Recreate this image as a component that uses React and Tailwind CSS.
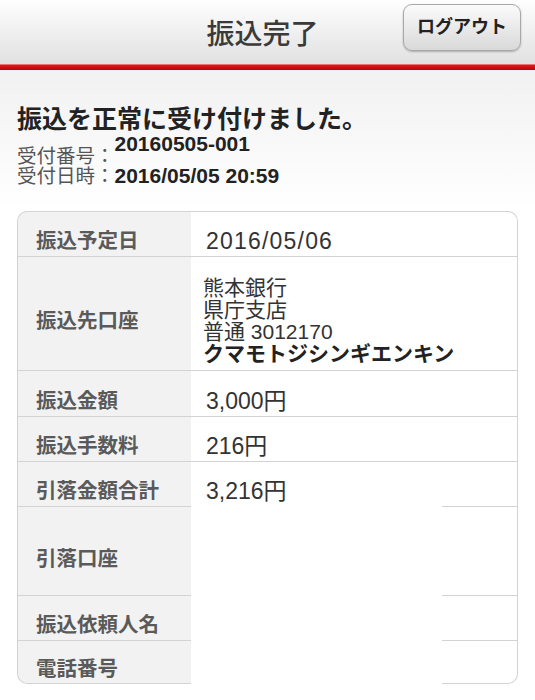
export default function App() {
  const border = "border-[#d3d3d3]";
  const labelBase =
    "w-[174px] shrink-0 bg-[#f2f2f2] border-l border-t border-[#d3d3d3] flex items-center pl-[18px] text-[20.5px] leading-[22px] font-bold text-[#5a5a5a]";
  const valueBase =
    "flex-1 bg-white border-t border-r border-[#d3d3d3] pl-[15px] text-[23px] leading-[22px] text-[#333]";

  return (
    <div className="w-[535px] h-[700px] overflow-hidden bg-white font-['Liberation_Sans','Noto_Sans_CJK_JP',sans-serif]">
      {/* header */}
      <div className="h-[64px] bg-[linear-gradient(#fefefe,#e1e1e1)] grid grid-cols-[1fr_auto_1fr] items-center">
        <div />
        <h1 className="text-[28px] leading-[32px] font-medium text-[#3a3a3a] pr-[10px] pt-[6px]">振込完了</h1>
        <div className="flex justify-end pr-[14px]">
          <button className="w-[118px] h-[47px] rounded-[9px] border border-[#a8a8a8] bg-[linear-gradient(#fbfbfb,#d9d9d9)] shadow-[0_1px_2px_rgba(0,0,0,0.25)] text-[18px] font-bold text-[#222] mb-[9px]">
            ログアウト
          </button>
        </div>
      </div>
      <div className="h-[6px] bg-[linear-gradient(#f07070_0,#f07070_1px,#d81c1c_1px,#c40000_6px)]" />

      {/* body */}
      <div className="bg-[linear-gradient(#f1f1f1,#ffffff_140px)] pt-[35px] pb-[40px]">
        <div className="px-[17px]">
          <p className="text-[25px] leading-[28px] font-bold text-[#222]">振込を正常に受け付けました。</p>
          <div className="flex items-start text-[19.5px] leading-[20px]">
            <span className="text-[#555] pt-[13px]">受付番号：</span>
            <span className="font-bold text-[21px] text-[#222] mt-[1px]">20160505-001</span>
          </div>
          <div className="flex items-start text-[19.5px] leading-[20px]">
            <span className="text-[#555]">受付日時：</span>
            <span className="font-bold text-[21px] text-[#222]">2016/05/05 20:59</span>
          </div>
        </div>

        <div className="mx-[17px] mt-[25px]">
          <div className="flex">
            <div className={`${labelBase} rounded-tl-[10px] pt-[18px] pb-[4px]`}>振込予定日</div>
            <div className={`${valueBase} rounded-tr-[10px] pt-[18px] pb-[4px] tracking-[1.2px]`}>2016/05/06</div>
          </div>
          <div className="flex">
            <div className={`${labelBase} pt-[20px] pb-[5px]`}>振込先口座</div>
            <div className={`${valueBase} !pl-[12px] pt-[20px] pb-[5px] !text-[21px]`}>
              <div>熊本銀行</div>
              <div>県庁支店</div>
              <div>普通 3012170</div>
              <div className="font-bold text-[#222]">クマモトジシンギエンキン</div>
            </div>
          </div>
          <div className="flex">
            <div className={`${labelBase} pt-[19px] pb-[4px]`}>振込金額</div>
            <div className={`${valueBase} pt-[19px] pb-[4px]`}>3,000円</div>
          </div>
          <div className="flex">
            <div className={`${labelBase} pt-[18px] pb-[4px]`}>振込手数料</div>
            <div className={`${valueBase} pt-[18px] pb-[4px]`}>216円</div>
          </div>
          <div className="flex">
            <div className={`${labelBase} pt-[18px] pb-[4px]`}>引落金額合計</div>
            <div className={`${valueBase} pt-[18px] pb-[4px]`}>3,216円</div>
          </div>
          <div className="flex">
            <div className={`${labelBase} h-[89px] pt-[16px]`}>引落口座</div>
            <div className="w-[251px] bg-white" />
            <div className={`flex-1 bg-white border-t border-r ${border}`} />
          </div>
          <div className="flex">
            <div className={`${labelBase} pt-[18px] pb-[4px]`}>振込依頼人名</div>
            <div className="w-[251px] bg-white" />
            <div className={`flex-1 bg-white border-t border-r ${border}`} />
          </div>
          <div className="flex">
            <div className={`${labelBase} border-b rounded-bl-[10px] pt-[17px] pb-[3px]`}>電話番号</div>
            <div className="w-[251px] bg-white" />
            <div className={`flex-1 bg-white border-t border-r border-b rounded-br-[10px] ${border}`} />
          </div>
        </div>
      </div>
    </div>
  );
}
